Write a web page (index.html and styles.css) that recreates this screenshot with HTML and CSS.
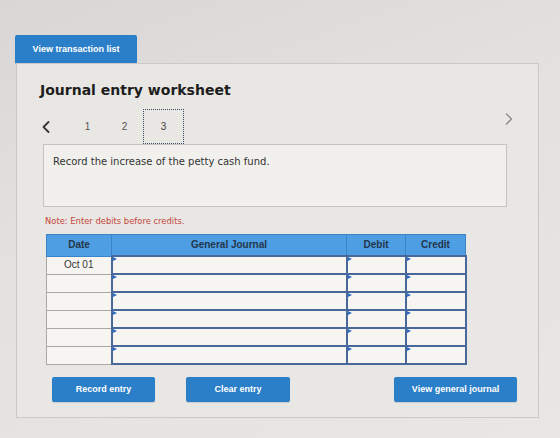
FILE: index.html
```html
<!DOCTYPE html>
<html lang="en">
<head>
<meta charset="utf-8">
<title>Journal entry worksheet</title>
<link rel="stylesheet" href="styles.css">
</head>
<body>
<div class="screen">
  <button class="btn btn-list">View transaction list</button>

  <section class="worksheet">
    <h1 class="title">Journal entry worksheet</h1>

    <div class="tabs">
      <svg class="chev chev-prev" width="8" height="12" viewBox="0 0 8 12"><polyline points="6.5,1 1.5,6 6.5,11"/></svg>
      <span class="tab">1</span>
      <span class="tab">2</span>
      <span class="tab tab-active">3</span>
      <svg class="chev chev-next" width="8" height="12" viewBox="0 0 8 12"><polyline points="1.5,1 6.5,6 1.5,11"/></svg>
    </div>

    <div class="prompt">Record the increase of the petty cash fund.</div>

    <p class="note">Note: Enter debits before credits.</p>

    <table class="journal">
      <colgroup>
        <col class="c-date"><col class="c-acct"><col class="c-debit"><col class="c-credit">
      </colgroup>
      <thead>
        <tr><th>Date</th><th>General Journal</th><th>Debit</th><th>Credit</th></tr>
      </thead>
      <tbody>
        <tr><td class="date">Oct 01</td><td class="entry"></td><td class="entry"></td><td class="entry"></td></tr>
        <tr><td class="date"></td><td class="entry"></td><td class="entry"></td><td class="entry"></td></tr>
        <tr><td class="date"></td><td class="entry"></td><td class="entry"></td><td class="entry"></td></tr>
        <tr><td class="date"></td><td class="entry"></td><td class="entry"></td><td class="entry"></td></tr>
        <tr><td class="date"></td><td class="entry"></td><td class="entry"></td><td class="entry"></td></tr>
        <tr><td class="date"></td><td class="entry"></td><td class="entry"></td><td class="entry"></td></tr>
      </tbody>
    </table>

    <div class="actions">
      <button class="btn btn-record">Record entry</button>
      <button class="btn btn-clear">Clear entry</button>
      <button class="btn btn-view">View general journal</button>
    </div>
  </section>
</div>
</body>
</html>
```

FILE: styles.css
```css
html, body {
  margin: 0;
  padding: 0;
}

body {
  width: 560px;
  height: 438px;
  overflow: hidden;
  background: linear-gradient(160deg, #d9d7d5 0%, #e3e1df 40%, #e9e7e4 100%);
  font-family: "DejaVu Sans", Verdana, sans-serif;
}

.screen {
  padding: 35px 0 0 15px;
}

/* Buttons */
.btn {
  display: block;
  margin: 0;
  padding: 0;
  border: 0;
  border-radius: 2px;
  background: #2b7fc8;
  color: #fff;
  font: 700 9px/1 "Liberation Sans", Arial, sans-serif;
  text-align: center;
  box-shadow: 0 1px 1px rgba(0, 0, 0, 0.12);
}

.btn-list {
  width: 122px;
  height: 29px;
}

/* Worksheet panel */
.worksheet {
  box-sizing: border-box;
  width: 523px;
  height: 355px;
  margin: -1px 0 0 1px;
  padding: 18px 31px 0 26px;
  border: 1px solid #cbc9c5;
  background: #e9e7e3;
}

.title {
  margin: 0 0 0 -3px;
  font: 700 14px/17px "DejaVu Sans", Verdana, sans-serif;
  color: #1d1d1d;
}

/* Step tabs */
.tabs {
  display: flex;
  align-items: center;
  height: 35px;
  margin-top: 10px;
}

.chev {
  fill: none;
  stroke-linecap: round;
  stroke-linejoin: round;
}

.chev-prev {
  margin: 0 19px 0 -1px;
  stroke: #353535;
  stroke-width: 1.8;
}

.chev-next {
  align-self: flex-start;
  margin: 4px -6px 0 auto;
  stroke: #8c8c8c;
  stroke-width: 1.5;
}

.tab {
  width: 37px;
  text-align: center;
  font: 10px/1 "Liberation Sans", Arial, sans-serif;
  color: #555;
}

.tab-active {
  box-sizing: border-box;
  display: flex;
  align-items: center;
  justify-content: center;
  width: 41px;
  height: 35px;
  border: 1px dotted #3c4a6a;
  color: #444;
}

/* Question prompt */
.prompt {
  box-sizing: border-box;
  height: 63px;
  padding: 10px 9px;
  border: 1px solid #c6c4c0;
  background: #f2f0ec;
  font-size: 10px;
  line-height: 14px;
  color: #333;
}

.note {
  margin: 8px 0 0 2px;
  font-size: 8.4px;
  line-height: 12px;
  color: #c4463c;
}

/* Journal grid */
.journal {
  width: 419px;
  margin: 7px 0 0 3px;
  border-collapse: collapse;
  table-layout: fixed;
}

.c-date { width: 65px; }
.c-acct { width: 235px; }
.c-debit { width: 59px; }
.c-credit { width: 60px; }

.journal th {
  height: 20px;
  padding: 0;
  border: 1px solid #3b84c8;
  background: #4d9ee2;
  font: 700 10px/1 "Liberation Sans", Arial, sans-serif;
  color: #24364b;
}

.journal td {
  height: 16px;
  padding: 0;
  background: #f6f5f2;
}

.journal td.date {
  border: 1px solid #a9a8a6;
  text-align: center;
  font: 10px/1 "Liberation Sans", Arial, sans-serif;
  color: #333;
}

.journal td.entry {
  position: relative;
  border: 2px solid #48689c;
}

/* small caret marking each editable cell */
.journal td.entry::before {
  content: "";
  position: absolute;
  top: 0;
  left: 0;
  border-left: 4px solid #2c6cc2;
  border-top: 2.5px solid transparent;
  border-bottom: 2.5px solid transparent;
}

/* Action buttons */
.actions {
  display: flex;
  align-items: flex-start;
  margin-top: 12px;
}

.actions .btn {
  height: 25px;
}

.btn-record {
  width: 103px;
  margin-left: 9px;
}

.btn-clear {
  width: 104px;
  margin-left: 31px;
}

.btn-view {
  width: 123px;
  margin: 0 -10px 0 auto;
}
```
